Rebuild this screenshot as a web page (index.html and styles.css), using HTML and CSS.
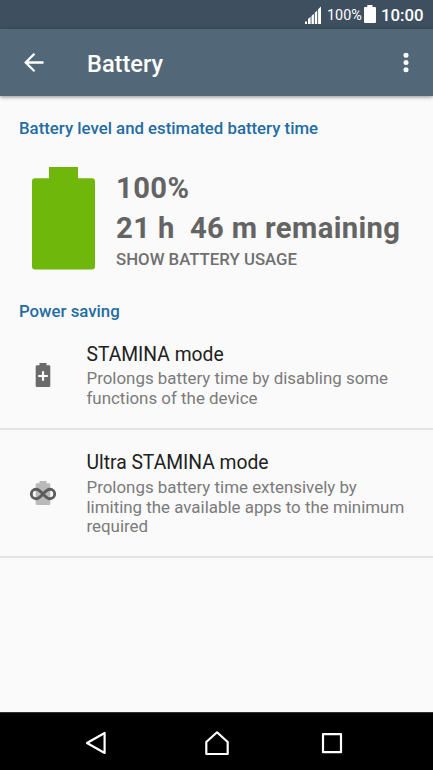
FILE: index.html
```
<!DOCTYPE html>
<html lang="en">
<head>
<meta charset="utf-8">
<title>Battery</title>
<link rel="stylesheet" href="styles.css">
</head>
<body>
<div class="phone">
  <div class="status">
    <svg class="signal" width="18" height="18" viewBox="0 0 18 18"><path d="M1 15.500h2V18H1zM4 13l2.600-2.200V18H4zM7.500 10l2.400-2.200V18H7.500zM10.800 6.700l2.400-2.200V18h-2.400zM14.100 3.200L17 .5V18h-2.900z"/></svg>
    <span class="percent">100%</span>
    <svg class="cell" width="12" height="18" viewBox="0 0 12 18"><path d="M3.300 0h5.200v2H11q1 0 1 1v14q0 1-1 1H1q-1 0-1-1V3q0-1 1-1h2.300z"/></svg>
    <span class="clock">10:00</span>
  </div>
  <header class="bar">
    <svg class="back" width="20" height="20" viewBox="0 0 20 20"><path d="M19.500 9.500H1.800M10.500 .7L1.700 9.500l8.800 8.800"/></svg>
    <h1>Battery</h1>
    <svg class="more" width="6" height="20" viewBox="0 0 6 20"><circle cx="3" cy="2.200" r="2.500"/><circle cx="3" cy="9.500" r="2.500"/><circle cx="3" cy="16.800" r="2.500"/></svg>
  </header>
  <main>
    <h2 class="level-heading">Battery level and estimated battery time</h2>
    <section class="level">
      <svg class="gauge" width="63" height="103" viewBox="0 0 63 103"><path d="M17 0h29v11.300h14q3 0 3 3V99.500q0 3-3 3H3q-3 0-3-3V14.300q0-3 3-3h14z"/></svg>
      <div class="level-text">
        <p class="big">100%</p>
        <p class="big">21 h  46 m remaining</p>
        <p class="usage">SHOW BATTERY USAGE</p>
      </div>
    </section>
    <h2 class="saving-heading">Power saving</h2>
    <section class="row stamina">
      <svg class="icon" width="28" height="26" viewBox="0 0 28 26"><path fill="#6b6b6b" d="M10.500 1h7v2.200H20q1.300 0 1.300 1.300v19.300q0 1.300-1.300 1.300H8q-1.300 0-1.300-1.300V4.500Q6.700 3.200 8 3.200h2.500z"/><path stroke="#fff" stroke-width="2.200" d="M14 9.200v9.600M9.200 14h9.600"/></svg>
      <div>
        <h3>STAMINA mode</h3>
        <p>Prolongs battery time by disabling some<br>functions of the device</p>
      </div>
    </section>
    <section class="row ultra">
      <svg class="icon" width="28" height="26" viewBox="0 0 28 26"><path fill="#bababa" d="M10.500 1h7v2.200H20q1.300 0 1.300 1.300v19.300q0 1.300-1.300 1.300H8q-1.300 0-1.300-1.300V4.500Q6.700 3.200 8 3.200h2.500z"/><path fill="none" stroke="#5c5c5c" stroke-width="2.900" d="M14 14C11.500 11.500 10 9.300 7 9.300a4.700 4.700 0 0 0 0 9.400C10 18.700 11.500 16.500 14 14S18 9.300 21 9.300a4.700 4.700 0 0 1 0 9.400C18 18.700 16.500 16.500 14 14z"/></svg>
      <div>
        <h3>Ultra STAMINA mode</h3>
        <p>Prolongs battery time extensively by<br>limiting the available apps to the minimum<br>required</p>
      </div>
    </section>
  </main>
  <nav>
    <svg width="24" height="26" viewBox="0 0 24 26"><path d="M20.600 3v20L3 13z"/></svg>
    <svg width="26" height="26" viewBox="0 0 26 26"><path d="M13 2.300L2.300 12v12h21.400V12z"/></svg>
    <svg width="24" height="26" viewBox="0 0 24 26"><path d="M3 4.200h18v18H3z"/></svg>
  </nav>
</div>
</body>
</html>
```
FILE: styles.css
```
* { box-sizing: border-box; margin: 0; padding: 0; }
body { font-family: Roboto, "Liberation Sans", sans-serif; background: #fafafa; }
svg { display: block; flex: none; }
.phone { width: 433px; height: 770px; display: flex; flex-direction: column; overflow: hidden; }

.status { height: 29px; background: #3e5060; color: #fff; display: flex; padding-left: 304px; flex: none; fill: #fff; }
.signal { margin-top: 6px; }
.percent { width: 35px; margin-left: 5px; font-size: 14.4px; line-height: 31px; white-space: nowrap; }
.cell { margin: 5px 0 0 2px; }
.clock { margin-left: 5px; font-size: 16.8px; font-weight: 500; line-height: 31px; }

.bar { height: 67px; background: #526878; color: #fff; display: flex; align-items: center; padding: 0 24px; flex: none; position: relative; box-shadow: 0 1px 4px rgba(0, 0, 0, .45); }
.back { fill: none; stroke: #fff; stroke-width: 2.3; }
.bar h1 { margin-left: 43px; padding-top: 3px; font-size: 23.6px; font-weight: 500; line-height: 30px; }
.more { margin-left: auto; fill: #fff; }

main { flex: 1; background: #fafafa; }
h2 { padding-left: 19px; font-size: 16.8px; font-weight: 500; line-height: 20px; color: #246ca4; }
.level-heading { padding-top: 22px; }
.level { display: flex; padding: 29px 0 0 32px; height: 163px; }
.gauge { fill: #70b70b; }
.level-text { margin-left: 21px; padding-top: 1px; color: #646464; }
.level-text p { white-space: pre; }
.big { font-size: 29.2px; font-weight: 700; line-height: 40px; letter-spacing: .38px; }
.usage { margin-top: 1px; font-size: 16.8px; font-weight: 500; line-height: 20px; color: #707070; }
.saving-heading { height: 20px; }

.row { display: flex; align-items: center; padding-left: 29px; border-bottom: 2px solid #e3e3e3; }
.stamina { height: 109px; }
.ultra { height: 128px; }
.row .icon { margin-right: 29.5px; }
h3 { padding-top: 1px; font-size: 19.3px; font-weight: 400; line-height: 25px; color: #212121; }
.row p { font-size: 16.9px; line-height: 19.7px; color: #7b7b7b; white-space: nowrap; padding-top: 2px; }
.ultra p { padding-top: 3px; }

nav { height: 58px; background: #000; border-top: 1px solid #333; display: flex; justify-content: space-between; align-items: center; padding: 2px 89px 0 84px; fill: none; stroke: #fff; stroke-width: 2.2; stroke-linejoin: round; }
nav svg:nth-child(2) { margin-left: 5px; }
```
